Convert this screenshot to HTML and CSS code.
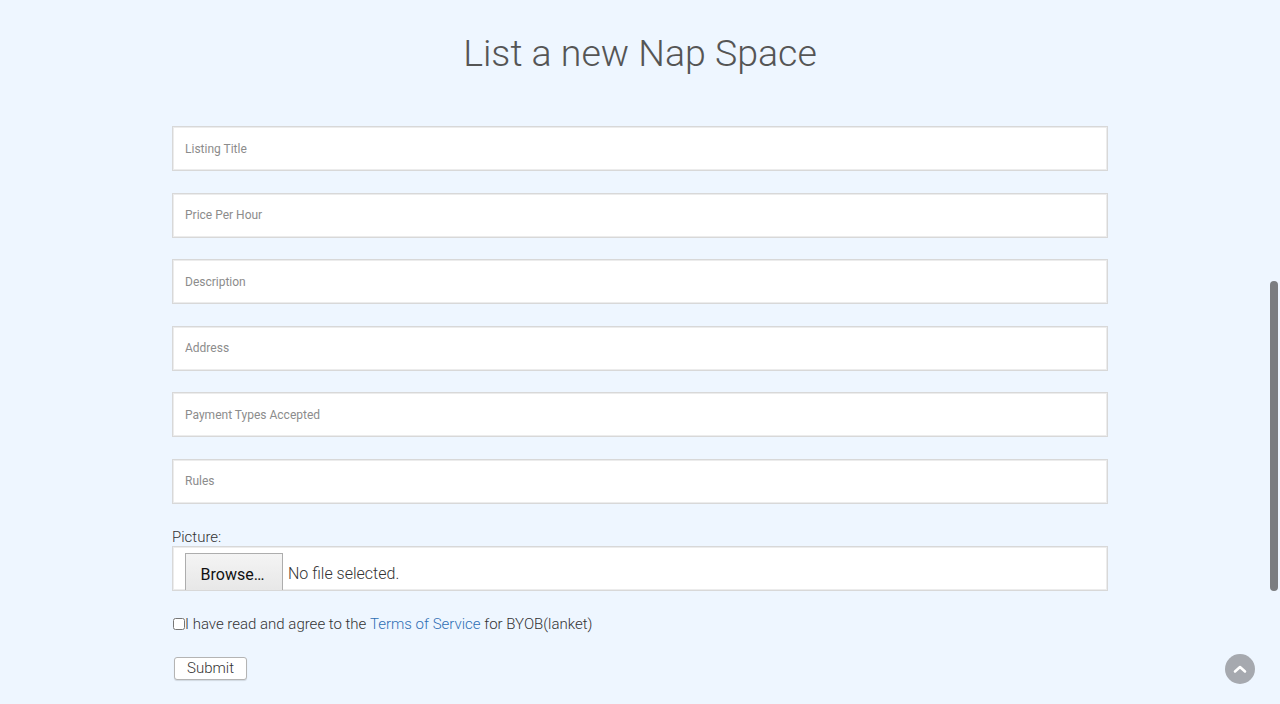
FILE: index.html
```html
<!DOCTYPE html>
<html>
<head>
<meta charset="utf-8">
<link rel="stylesheet" href="styles.css">
</head>
<body>
<main class="page">
  <h1 class="title">List a new Nap Space</h1>
  <form class="form">
    <input class="field" type="text" placeholder="Listing Title">
    <input class="field" type="text" placeholder="Price Per Hour">
    <input class="field" type="text" placeholder="Description">
    <input class="field" type="text" placeholder="Address">
    <input class="field" type="text" placeholder="Payment Types Accepted">
    <input class="field" type="text" placeholder="Rules">
    <div class="picture">
      <label class="pic-label">Picture:</label>
      <div class="file-box">
        <span class="browse">Browse…</span>
        <span class="nofile">No file selected.</span>
      </div>
    </div>
    <label class="agree"><input class="check" type="checkbox">I have read and agree to the <a class="link" href="#">Terms of Service</a> for BYOB(lanket)</label>
    <div class="actions"><button class="submit" type="button">Submit</button></div>
  </form>
</main>
<div class="scrollbar"><div class="thumb"></div></div>
<a class="to-top" href="#"><svg width="14" height="10" viewBox="0 0 14 10"><path d="M2 7.5 L7 3 L12 7.5" fill="none" stroke="#fff" stroke-width="2.6" stroke-linecap="round" stroke-linejoin="round"/></svg></a>
</body>
</html>
```

FILE: styles.css
```css
html, body {
  margin: 0;
  padding: 0;
  height: 704px;
  overflow: hidden;
}
body {
  background: #eef6ff;
  font-family: Roboto, "Liberation Sans", sans-serif;
  color: #333;
}
.page {
  width: 936px;
  margin: 0 auto;
}
.title {
  margin: 0;
  padding-top: 30px;
  height: 126px;
  box-sizing: border-box;
  text-align: center;
  font-weight: 300;
  font-size: 37.5px;
  line-height: 46px;
  color: #555;
}
.form {
  display: flex;
  flex-direction: column;
}
.field {
  display: block;
  width: 936px;
  height: 45px;
  box-sizing: border-box;
  border: 1px solid #d8d8d8;
  box-shadow: inset 0 0 0 1px #ececec;
  background: #fff;
  padding: 0 12px;
  margin: 0 0 21.6px 0;
  font-family: Roboto, sans-serif;
  font-size: 12px;
  color: #555;
  outline: none;
}
.field::placeholder {
  color: #8c8c8c;
}
.picture {
  margin-top: 1px;
}
.pic-label {
  display: block;
  font-size: 15px;
  font-weight: 300;
  color: #333;
  line-height: 20px;
  margin-bottom: -1px;
}
.file-box {
  height: 45px;
  box-sizing: border-box;
  border: 1px solid #d8d8d8;
  box-shadow: inset 0 0 0 1px #ececec;
  background: #fff;
  padding: 6px 12px 0;
  display: flex;
  align-items: flex-start;
  overflow: hidden;
}
.browse {
  width: 98px;
  height: 42px;
  box-sizing: border-box;
  border: 1px solid #adadad;
  background: linear-gradient(#f4f4f4, #e6e6e6);
  font-size: 16px;
  color: #111;
  text-align: center;
  line-height: 42px;
  padding-right: 3px;
  flex: none;
}
.nofile {
  font-size: 16px;
  font-weight: 300;
  color: #333;
  line-height: 42px;
  margin-left: 5px;
}
.agree {
  display: flex;
  align-items: center;
  margin-top: 24px;
  font-size: 15px;
  font-weight: 300;
  color: #333;
  line-height: 18px;
  white-space: pre;
}
.check {
  margin: 1px 0 0 1px;
  width: 12px;
  height: 12px;
}
.link {
  color: #2e6fb5;
  text-decoration: none;
}
.actions {
  margin-top: 24px;
}
.submit {
  width: 73px;
  height: 23px;
  margin-left: 2px;
  background: #fff;
  border: 1px solid #b4b4b4;
  border-radius: 3px;
  box-shadow: 0 1px 1px rgba(0,0,0,0.12);
  font-family: Roboto, sans-serif;
  font-size: 15px;
  font-weight: 300;
  color: #333;
  padding: 0;
}
.scrollbar {
  position: fixed;
  right: 2px;
  top: 281px;
  width: 8px;
  height: 310px;
}
.thumb {
  width: 100%;
  height: 100%;
  background: #7b7d80;
  border-radius: 4px;
}
.to-top {
  position: fixed;
  left: 1225px;
  top: 654px;
  width: 30px;
  height: 30px;
  border-radius: 50%;
  background: #a6a9af;
  display: flex;
  align-items: center;
  justify-content: center;
}
```
